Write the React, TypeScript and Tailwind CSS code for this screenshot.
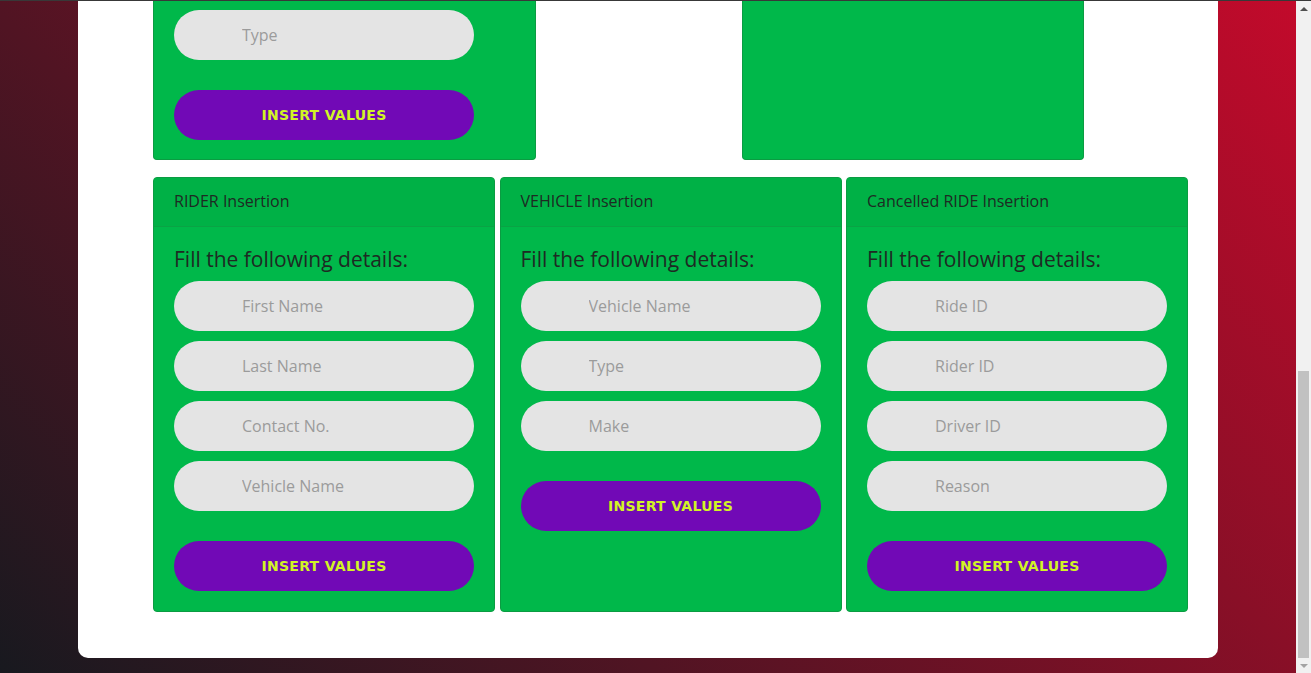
type CardProps = {
    title: string;
    fields: string[];
};

const InputPill = ({ placeholder }: { placeholder: string }) => (
    <input
        type="text"
        placeholder={placeholder}
        className="h-[50px] w-[300px] rounded-full bg-[#e4e4e4] pl-[68px] text-[16px] font-medium text-[#444] outline-none placeholder:text-[#9b9b9b]"
    />
);

const InsertButton = ({ className }: { className?: string }) => (
    <button
        className={`h-[50px] w-[300px] rounded-full bg-[#7109b6] text-[14px] font-bold tracking-[0.3px] text-[#d2f425] uppercase [font-family:'DejaVu_Sans',sans-serif] ${className ?? ""}`}
    >
        Insert Values
    </button>
);

const FormCard = ({ title, fields }: CardProps) => {
    return (
        <div className="flex flex-col rounded-[4px] border border-[#0b9c42] bg-[#00b84a]">
            <div className="flex h-[49px] items-center rounded-t-[3px] border-b border-[#0aa345] bg-[#00b146] px-[20px] pb-[2px] text-[16px] text-[#1e2a23]">
                {title}
            </div>
            <div className="px-[20px] pt-[20px] pb-[20px]">
                <p className="mb-[10px] text-[21px] leading-[24px] text-[#1e2a23]">Fill the following details:</p>
                <div className="flex flex-col gap-[10px]">
                    {fields.map((f) => (
                        <InputPill key={f} placeholder={f} />
                    ))}
                </div>
                <InsertButton className="mt-[30px]" />
            </div>
        </div>
    );
};

const Scrollbar = () => (
    <div className="flex w-[15px] shrink-0 flex-col bg-[#f1f1f1]">
        <div className="flex h-[15px] items-center justify-center">
            <div className="h-0 w-0 border-x-[4px] border-b-[4px] border-x-transparent border-b-[#505050]" />
        </div>
        <div className="flex flex-1 flex-col justify-end px-[2px]">
            <div className="h-[287px] bg-[#c1c1c1]" />
        </div>
        <div className="flex h-[15px] items-center justify-center">
            <div className="h-0 w-0 border-x-[4px] border-t-[4px] border-x-transparent border-t-[#a3a3a3]" />
        </div>
    </div>
);

const App = () => {
    return (
        <div className="flex h-[673px] flex-col overflow-hidden [font-family:'Open_Sans',sans-serif]">
            <div className="h-px shrink-0 bg-[#383838]" />
            <div className="flex flex-1">
                <div className="flex flex-1 flex-col bg-[linear-gradient(45deg,#18191f,#c20a2b)] pb-[15px]">
                    <div className="mx-auto w-[1140px] flex-1 rounded-b-[10px] bg-white pr-[30px] pb-[46px] pl-[75px]">
                        <div className="flex h-[159px] items-stretch gap-[206px]">
                            <div className="w-[383px] rounded-b-[4px] border-x border-b border-[#0b9c42] bg-[#00b84a] px-[20px] pt-[9px]">
                                <InputPill placeholder="Type" />
                                <InsertButton className="mt-[30px]" />
                            </div>
                            <div className="w-[342px] rounded-b-[4px] border-x border-b border-[#0b9c42] bg-[#00b84a]" />
                        </div>

                        <div className="mt-[17px] grid w-[1035px] grid-cols-3 items-stretch gap-[4.5px]">
                            <FormCard
                                title="RIDER Insertion"
                                fields={["First Name", "Last Name", "Contact No.", "Vehicle Name"]}
                            />
                            <FormCard title="VEHICLE Insertion" fields={["Vehicle Name", "Type", "Make"]} />
                            <FormCard
                                title="Cancelled RIDE Insertion"
                                fields={["Ride ID", "Rider ID", "Driver ID", "Reason"]}
                            />
                        </div>
                    </div>
                </div>
                <Scrollbar />
            </div>
        </div>
    );
};

export default App;
